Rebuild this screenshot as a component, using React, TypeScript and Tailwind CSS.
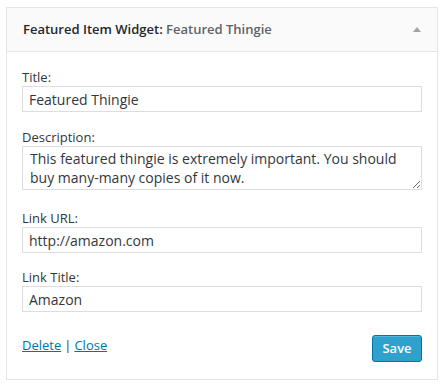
const font = { fontFamily: '"Open Sans", "Noto Sans", sans-serif' }

function Field({ label, value, top }: { label: string; value: string; top: string }) {
  return (
    <div className={top}>
      <label className="block text-[13px] leading-[18px] text-[#32373c]">{label}</label>
      <input
        readOnly
        value={value}
        className="block w-full h-[26px] border border-[#dddddd] px-[6px] text-[14px] text-[#32373c] outline-none"
        style={font}
      />
    </div>
  )
}

export default function App() {
  return (
    <div className="bg-white w-[444px] h-[389px] pl-[6px] pt-[7px]" style={font}>
      <div className="w-[432px] border border-[#e5e5e5] bg-white">
        <div className="h-[44px] bg-[#fafafa] border-b border-[#e5e5e5] px-[16px] flex items-center justify-between">
          <h3 className="text-[13px] font-semibold text-[#23282d]">
            Featured Item Widget: <span className="text-[#5f6368]">Featured Thingie</span>
          </h3>
          <svg width="8" height="5" viewBox="0 0 8 5">
            <polygon points="4,0 8,5 0,5" fill="#a0a5aa" />
          </svg>
        </div>
        <div className="px-[15px] pt-[16px] pb-[17px]">
          <Field label="Title:" value="Featured Thingie" top="" />
          <div className="mt-[16px]">
            <label className="block text-[13px] leading-[18px] text-[#32373c]">Description:</label>
            <textarea
              readOnly
              value="This featured thingie is extremely important. You should buy many-many copies of it now."
              className="block w-full h-[44px] border border-[#dddddd] px-[7px] pt-[2px] text-[14px] leading-[19px] text-[#32373c] outline-none"
              style={font}
            />
          </div>
          <Field label="Link URL:" value="http://amazon.com" top="mt-[19px]" />
          <Field label="Link Title:" value="Amazon" top="mt-[15px]" />
          <div className="mt-[23px] flex items-start justify-between">
            <div className="text-[13px] text-[#32373c] pt-[1px]">
              <a href="#" className="text-[#0074a2] underline">Delete</a>
              <span className="mx-[3px]">|</span>
              <a href="#" className="text-[#0074a2] underline">Close</a>
            </div>
            <button className="h-[27px] w-[50px] rounded-[3px] border border-[#0074a2] bg-[#2ea2cc] text-white text-[13px] font-semibold shadow-[inset_0_1px_0_rgba(120,200,230,0.5)]">
              Save
            </button>
          </div>
        </div>
      </div>
    </div>
  )
}
